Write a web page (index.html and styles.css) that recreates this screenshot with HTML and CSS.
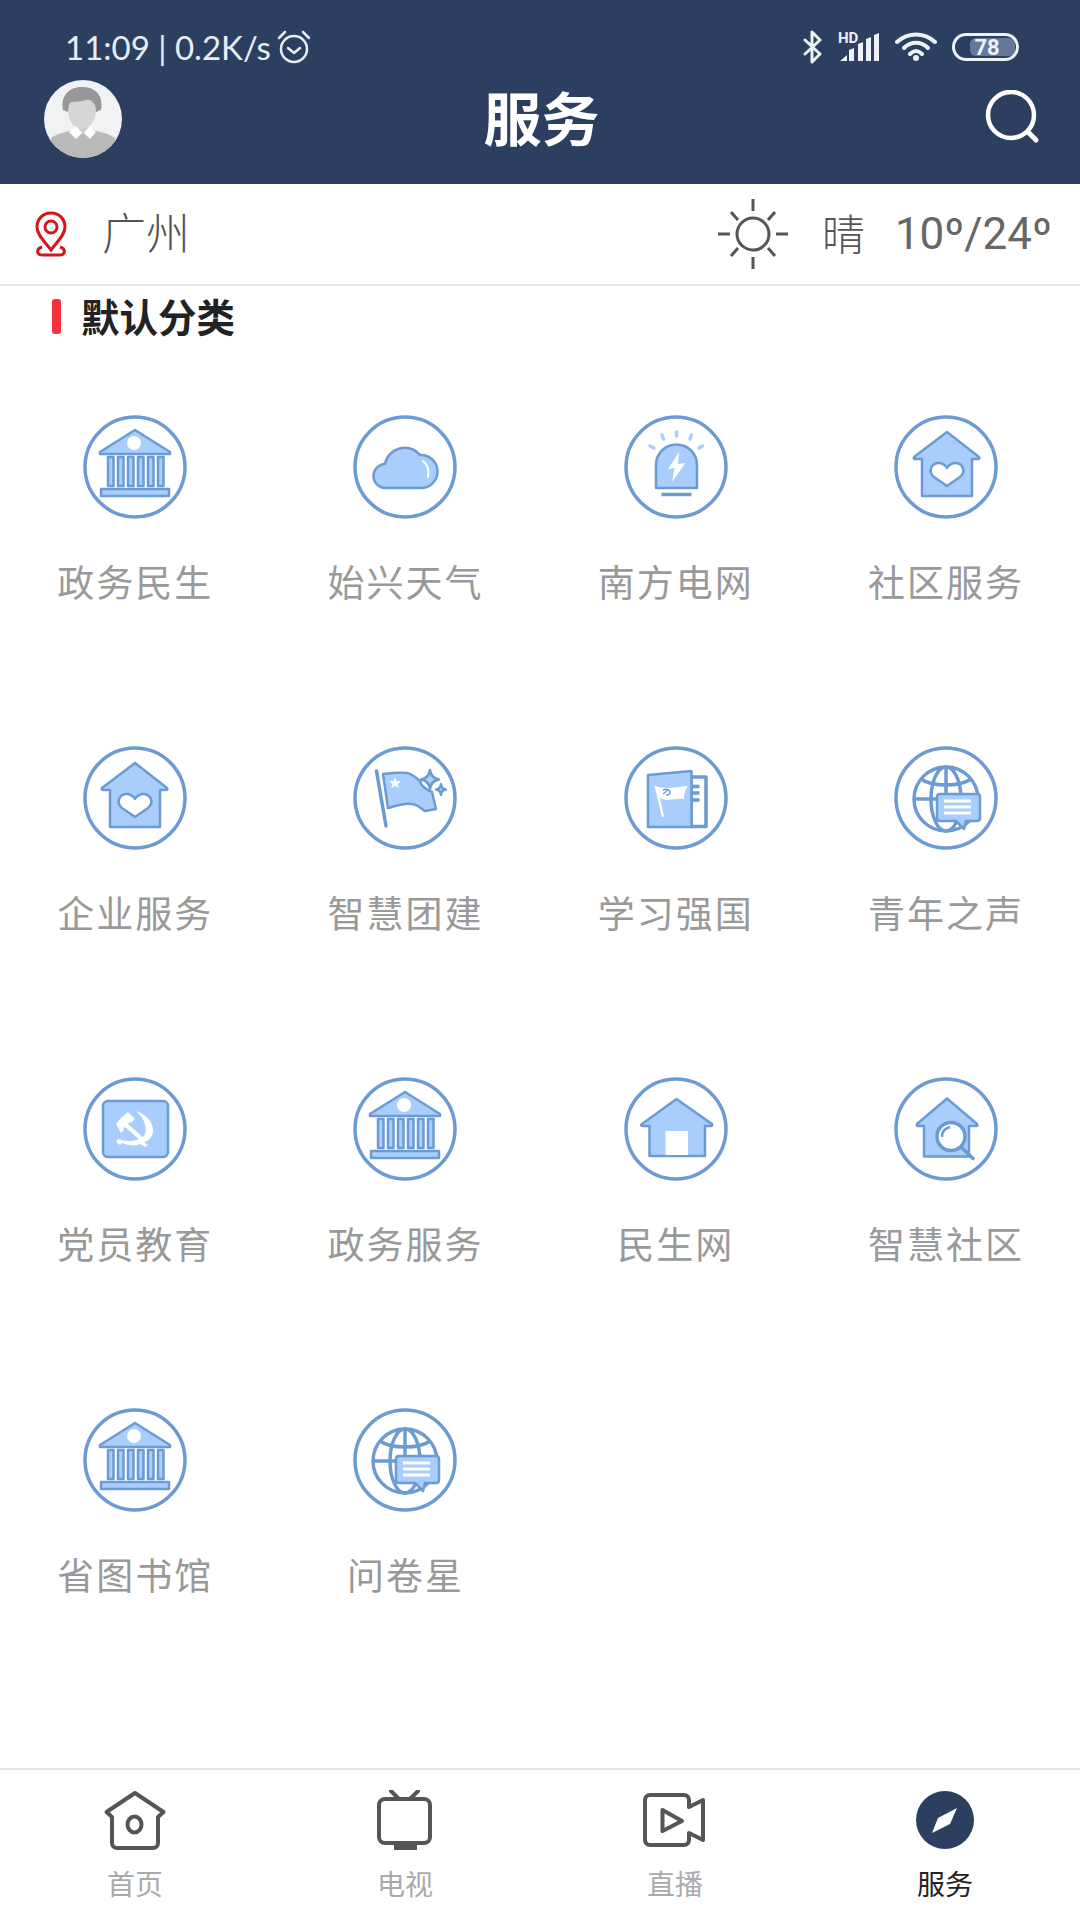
FILE: index.html
```html
<!DOCTYPE html>
<html lang="zh-CN">
<head>
    <meta charset="UTF-8">
    <meta name="viewport" content="width=device-width, initial-scale=1.0">
    <title>服务</title>
    <link rel="stylesheet" href="styles.css">
</head>
<body>
    <svg class="defs" width="0" height="0">
        <symbol id="bank" viewBox="0 0 104 104">
            <path class="sv" d="M52 15 87 37V39H17V37Z"/>
            <circle class="wh" cx="51" cy="28" r="7"/>
            <rect class="sv" x="25" y="42" width="5.500" height="29"/>
            <rect class="sv" x="35" y="42" width="5.500" height="29"/>
            <rect class="sv" x="45" y="42" width="5.500" height="29"/>
            <rect class="sv" x="55" y="42" width="5.500" height="29"/>
            <rect class="sv" x="65" y="42" width="5.500" height="29"/>
            <rect class="sv" x="75" y="42" width="5.500" height="29"/>
            <rect class="sv" x="18" y="74" width="68" height="7"/>
        </symbol>
        <symbol id="househeart" viewBox="0 0 104 104">
            <path class="sv" d="M53 17 85 42Q86 44 84 44H78V81H28V44H22Q19 44 20 42Z"/>
            <path class="wl" d="M53 71 40 62C33 56 38 47 46 48 50 49 52 51 53 53 54 51 56 49 60 48 68 47 73 56 66 62Z"/>
        </symbol>
        <symbol id="globechat" viewBox="0 0 104 104">
            <circle class="ol heavy" cx="52" cy="53" r="32"/>
            <ellipse class="ol heavy" cx="52" cy="53" rx="15" ry="32"/>
            <path class="ol heavy" d="M52 21V50M20 53H44M27 33C38 41 66 41 77 33"/>
            <path class="sv" d="M46 48H83Q86 48 86 51V72Q86 75 83 75H72L70 83 62 75H46Q43 75 43 72V51Q43 48 46 48Z"/>
            <path class="wb" d="M50 55H77M50 61H77M50 67H77"/>
        </symbol>
    </svg>

    <div class="page">
        <header class="topbar">
            <div class="status">
                <div class="status-left">
                    <span class="clock">11:09 | 0.2K/s</span>
                    <svg class="alarm" width="36" height="36" viewBox="0 0 36 36">
                        <circle cx="18" cy="20" r="13"/>
                        <path d="M12 19 18 24 24 19M3 9 9 3M27 3 33 9"/>
                    </svg>
                </div>
                <div class="status-right">
                    <svg class="st-bt" width="20" height="34" viewBox="0 0 20 34">
                        <path d="M2 10 17 24 9 32V2L17 10 2 24"/>
                    </svg>
                    <svg class="st-sig" width="42" height="32" viewBox="0 0 42 32">
                        <text x="0" y="12">HD</text>
                        <path d="M2 30 9 24V30ZM11 30V19L16 17V30ZM20 30V13L25 11V30ZM28 30V8L33 6V30ZM36 30V4L41 2V30Z"/>
                    </svg>
                    <svg class="st-wifi" width="42" height="30" viewBox="0 0 42 30">
                        <path d="M2 10C13 0 29 0 40 10M9 16C16 9 26 9 33 16M15 22C19 18 23 18 27 22"/>
                        <circle cx="21" cy="26" r="3"/>
                    </svg>
                    <svg class="st-bat" width="67" height="28" viewBox="0 0 67 28">
                        <rect class="bat-level" x="18" y="5" width="45" height="18" rx="6"/>
                        <rect class="bat-case" x="1.500" y="1.500" width="64" height="25" rx="12.500"/>
                        <text x="35" y="22">78</text>
                    </svg>
                </div>
            </div>
            <div class="toolbar">
                <svg class="avatar" width="78" height="78" viewBox="0 0 78 78">
                    <defs><clipPath id="avclip"><circle cx="39" cy="39" r="39"/></clipPath></defs>
                    <g clip-path="url(#avclip)">
                        <rect width="78" height="78" fill="#f1f2f4"/>
                        <path d="M7 58C15 52 27 52 31 48H47C51 52 63 52 71 58V78H7Z" fill="#b9b9b9"/>
                        <path d="M39 54 28 52 34 46 39 50 44 46 50 52Z" fill="#d0d0d0"/>
                        <ellipse cx="38" cy="30" rx="14" ry="19" fill="#d6d6d6"/>
                        <path d="M19 30C16 14 27 7 38 7 50 7 60 14 57 30L52 32C52 24 48 19 42 20 34 23 28 20 25 24L24 32Z" fill="#979797"/>
                        <path d="M32 46 38 53 32 59 25 52ZM46 46 52 52 46 59 40 53Z" fill="#fff"/>
                    </g>
                </svg>
                <h1 class="title">服务</h1>
                <svg class="search" width="56" height="56" viewBox="0 0 56 56">
                    <circle cx="26" cy="25" r="23"/>
                    <path d="M43 42 51 50"/>
                </svg>
            </div>
        </header>

        <div class="locbar">
            <svg class="pin" width="34" height="46" viewBox="0 0 34 46">
                <path d="M17 2C8 2 3 9 3 16 3 24 11 31 17 39 23 31 31 24 31 16 31 9 26 2 17 2Z"/>
                <circle cx="17" cy="16" r="6"/>
                <path d="M8 36C2 38 2 44 9 44H25C32 44 32 38 26 36"/>
            </svg>
            <span class="city">广州</span>
            <div class="weather">
                <svg class="sun" width="72" height="70" viewBox="0 0 72 70">
                    <circle cx="36" cy="35" r="16"/>
                    <path d="M36 0V12M36 58V70M1 35H13M59 35H71M14 13 21 21M58 13 51 21M14 57 21 49M58 57 51 49"/>
                </svg>
                <span class="sky">晴</span>
                <span class="temp">10º/24º</span>
            </div>
        </div>

        <main class="content">
            <div class="section-head">
                <i class="section-mark"></i>
                <h2 class="section-title">默认分类</h2>
            </div>
            <div class="grid">
                <div class="cell">
                    <svg class="icon" viewBox="0 0 104 104"><circle class="ring" cx="52" cy="52" r="50"/><use href="#bank"/></svg>
                    <span class="label">政务民生</span>
                </div>
                <div class="cell">
                    <svg class="icon" viewBox="0 0 104 104">
                        <circle class="ring" cx="52" cy="52" r="50"/>
                        <path class="sv" d="M33 73A12 12 0 0 1 32 49A20 20 0 0 1 67 40A16.500 16.500 0 0 1 69 73Z"/>
                        <path class="wb thin" d="M70 46Q77 52 75 62"/>
                    </svg>
                    <span class="label">始兴天气</span>
                </div>
                <div class="cell">
                    <svg class="icon" viewBox="0 0 104 104">
                        <circle class="ring" cx="52" cy="52" r="50"/>
                        <path class="sv" d="M32 73V50A20.500 20.500 0 0 1 73 50V73Z"/>
                        <path class="wh" d="M55 37 44 54 50.500 53 48 67 61.500 48 54 49Z"/>
                        <path class="ol heavy" d="M37.500 79.500H67.500"/>
                        <path class="rays" d="M26 31 30 33M38 20 39.500 24M52.500 17V21M67.500 20 66 24M78.500 31 75 33"/>
                    </svg>
                    <span class="label">南方电网</span>
                </div>
                <div class="cell">
                    <svg class="icon" viewBox="0 0 104 104"><circle class="ring" cx="52" cy="52" r="50"/><use href="#househeart"/></svg>
                    <span class="label">社区服务</span>
                </div>

                <div class="cell">
                    <svg class="icon" viewBox="0 0 104 104"><circle class="ring" cx="52" cy="52" r="50"/><use href="#househeart" x="-1"/></svg>
                    <span class="label">企业服务</span>
                </div>
                <div class="cell">
                    <svg class="icon" viewBox="0 0 104 104">
                        <circle class="ring" cx="52" cy="52" r="50"/>
                        <path class="ol heavy round" d="M23.500 25 33 80"/>
                        <path class="sv" d="M30 28C38 27 46 26 54 27 60 28 63 32 67 35 68 40 72 43 79 46L83 63 72 65C68 63 65 58 58 58 50 57 43 60 35 62Z"/>
                        <path class="wh" d="M42 31 43.500 35 48 35 44.500 38 46 42 42 40 38 42 39.500 38 36 35 40.500 35Z"/>
                        <path class="sv" d="M77 24Q78 32 86 33.500 78 35 77 43 76 35 68 33.500 76 32 77 24Z"/>
                        <path class="sv" d="M88 38Q88.500 43 93 43.500 88.500 44 88 49 87.500 44 83 43.500 87.500 43 88 38Z"/>
                    </svg>
                    <span class="label">智慧团建</span>
                </div>
                <div class="cell">
                    <svg class="icon" viewBox="0 0 104 104">
                        <circle class="ring" cx="52" cy="52" r="50"/>
                        <path class="wl heavy" d="M67 31H82V80.500H67Z"/>
                        <path class="ol heavy" d="M68 40.500H75.500M68 47H75.500M68 54H75.500"/>
                        <path class="sv" d="M24 29 67.500 25V81H24Z"/>
                        <path class="wh" d="M30.500 39.500C40 44 50 41 64 40 60 46 60 50 60 53 50 52 44 56 36 52L40 70.500 38 71Z"/>
                        <path class="hs" d="M39 44Q43 42 46 45 47 49 42 49M39 48 44 44"/>
                    </svg>
                    <span class="label">学习强国</span>
                </div>
                <div class="cell">
                    <svg class="icon" viewBox="0 0 104 104"><circle class="ring" cx="52" cy="52" r="50"/><use href="#globechat"/></svg>
                    <span class="label">青年之声</span>
                </div>

                <div class="cell">
                    <svg class="icon" viewBox="0 0 104 104">
                        <circle class="ring" cx="52" cy="52" r="50"/>
                        <rect class="sv" x="20" y="24" width="65" height="56" rx="5"/>
                        <path class="wh" d="M53 34C62 37 70 44 70 53 70 60 66 64 61 65L65 68 62 70 57 67C50 70 45 68 39 66L37 68 33 65 35 62C44 65 55 65 61 59 65 52 62 42 53 34Z"/>
                        <path class="wh" d="M38 41 45 35 52 42 48 46 47 45 45 47 62 62 59 65 42 50 40 52 41 53 38 56 33 47Z"/>
                    </svg>
                    <span class="label">党员教育</span>
                </div>
                <div class="cell">
                    <svg class="icon" viewBox="0 0 104 104"><circle class="ring" cx="52" cy="52" r="50"/><use href="#bank"/></svg>
                    <span class="label">政务服务</span>
                </div>
                <div class="cell">
                    <svg class="icon" viewBox="0 0 104 104">
                        <circle class="ring" cx="52" cy="52" r="50"/>
                        <path class="sv" d="M52.500 22 88 47Q89 49 87 49H81V79H25.500V49H19Q16 49 18 47Z"/>
                        <rect class="wf" x="41.500" y="54" width="22.500" height="24"/>
                    </svg>
                    <span class="label">民生网</span>
                </div>
                <div class="cell">
                    <svg class="icon" viewBox="0 0 104 104">
                        <circle class="ring" cx="52" cy="52" r="50"/>
                        <path class="sv" d="M53 21.500 83 47Q84 49 82 49H75V79.500H30V49H24Q22 49 23 47Z"/>
                        <path class="ol heavy round" d="M67 70 79 81.500"/>
                        <circle class="wl heavy" cx="57" cy="59.500" r="14"/>
                        <path class="ol" d="M48 60Q48 52 56 50"/>
                    </svg>
                    <span class="label">智慧社区</span>
                </div>

                <div class="cell">
                    <svg class="icon" viewBox="0 0 104 104"><circle class="ring" cx="52" cy="52" r="50"/><use href="#bank"/></svg>
                    <span class="label">省图书馆</span>
                </div>
                <div class="cell">
                    <svg class="icon" viewBox="0 0 104 104"><circle class="ring" cx="52" cy="52" r="50"/><use href="#globechat"/></svg>
                    <span class="label">问卷星</span>
                </div>
            </div>
        </main>

        <nav class="tabbar">
            <div class="tab">
                <svg class="tab-icon" viewBox="0 0 64 62">
                    <path d="M9 27 3.500 22 32 3 60.500 22 55 27V53A5 5 0 0 1 50 58H14A5 5 0 0 1 9 53Z"/>
                    <ellipse cx="31.500" cy="34.500" rx="7" ry="8"/>
                </svg>
                <span class="tab-label">首页</span>
            </div>
            <div class="tab">
                <svg class="tab-icon" viewBox="0 0 64 62">
                    <rect x="6" y="9" width="51" height="44" rx="6"/>
                    <path d="M18 1 26 9M45 1 37 9"/>
                    <path class="tab-fill" d="M21 55H44V60H21Z"/>
                </svg>
                <span class="tab-label">电视</span>
            </div>
            <div class="tab">
                <svg class="tab-icon" viewBox="0 0 64 62">
                    <path d="M46 17V10A5 5 0 0 0 41 5H7A5 5 0 0 0 2 10V50A5 5 0 0 0 7 55H41A5 5 0 0 0 46 50V43L60 50V10Z"/>
                    <path d="M19.500 20 39 31 19.500 41Z"/>
                </svg>
                <span class="tab-label">直播</span>
            </div>
            <div class="tab active">
                <svg class="tab-icon compass" viewBox="0 0 64 62">
                    <circle cx="32" cy="30" r="29"/>
                    <path class="needle" d="M44 18 37 34 19 43 25 28Z"/>
                </svg>
                <span class="tab-label">服务</span>
            </div>
        </nav>
    </div>
</body>
</html>
```

FILE: styles.css
```css
* { box-sizing: border-box; }
body { margin: 0; background: #fff; font-family: "Noto Sans CJK SC", "Noto Sans", sans-serif; }
h1, h2 { margin: 0; }
.defs { position: absolute; }
.page { width: 1080px; height: 1920px; display: flex; flex-direction: column; overflow: hidden; }

/* top bar */
.topbar { height: 184px; background: #2c3f60; color: #fff; padding-top: 28px; }
.status { height: 38px; display: flex; align-items: center; justify-content: space-between; padding: 0 61px 0 65px; }
.status-left { display: flex; align-items: center; gap: 5px; }
.clock { font-family: Lato, sans-serif; font-size: 33px; color: #e8ecf3; white-space: nowrap; }
.alarm { fill: none; stroke: #e8ecf3; stroke-width: 2.5; stroke-linecap: round; stroke-linejoin: round; }
.status-right { display: flex; align-items: center; gap: 15px; }
.st-bt path { fill: none; stroke: #eef1f6; stroke-width: 3; stroke-linejoin: round; stroke-linecap: round; }
.st-sig { fill: #eef1f6; overflow: visible; }
.st-sig text { font-family: Roboto, sans-serif; font-weight: 700; font-size: 15px; }
.st-wifi path { fill: none; stroke: #eef1f6; stroke-width: 4; stroke-linecap: round; }
.st-wifi circle { fill: #eef1f6; }
.bat-case { fill: none; stroke: #eef1f6; stroke-width: 3; }
.bat-level { fill: #66779a; }
.st-bat text { font-family: Roboto, sans-serif; font-weight: 700; font-size: 22px; fill: #eef1f6; text-anchor: middle; }
.toolbar { height: 104px; display: grid; grid-template-columns: 1fr auto 1fr; align-items: center; padding: 0 39px 0 44px; }
.avatar { margin-top: 2px; }
.title { font-size: 58px; line-height: 1; font-weight: 700; margin: -5px 0 0 -2px; }
.search { justify-self: end; fill: none; stroke: #fff; stroke-width: 5; stroke-linecap: round; margin-top: -1px; }
.search circle { stroke-width: 4.5; }

/* city and weather */
.locbar { height: 102px; display: flex; align-items: center; padding: 0 28px 0 34px; border-bottom: 2px solid #e5e5e5; color: #555; }
.pin { fill: none; stroke: #d3161c; stroke-width: 3; }
.city { font-size: 44px; line-height: 1; font-weight: 300; margin: -6px 0 0 34px; }
.weather { margin-left: auto; display: flex; align-items: center; }
.sun { fill: none; stroke: #555; stroke-width: 3; }
.sky { font-size: 43px; line-height: 1; font-weight: 300; margin: -4px 0 0 33px; }
.temp { font-family: Roboto, sans-serif; font-size: 44px; color: #666; margin-left: 30px; }

/* service grid */
.content { flex: 1; }
.section-head { height: 60px; display: flex; align-items: center; padding-left: 52px; }
.section-mark { display: block; width: 9px; height: 35px; background: #f5333a; border-radius: 3px; margin-top: 1px; }
.section-title { font-size: 38.500px; line-height: 1; font-weight: 700; color: #222; margin: -1px 0 0 20px; }
.grid { display: grid; grid-template-columns: repeat(4, 270.300px); grid-auto-rows: 331px; padding-top: 69px; }
.cell { display: flex; flex-direction: column; align-items: center; }
.icon { width: 104px; height: 104px; display: block; }
.label { margin-top: 37px; font-size: 37px; line-height: 50px; letter-spacing: 2px; color: #999; white-space: nowrap; }

.ring { fill: #fff; stroke: #6c9bd2; stroke-width: 3.500; }
.sv { fill: #a9cdfc; stroke: #6c9bd2; stroke-width: 2.500; stroke-linejoin: round; }
.wh { fill: #fff; }
.wf { fill: #fff; }
.wl { fill: #fff; stroke: #6c9bd2; stroke-width: 2.500; stroke-linejoin: round; }
.ol { fill: none; stroke: #6c9bd2; stroke-width: 2.500; }
.heavy { stroke-width: 3.500; }
.round { stroke-linecap: round; }
.wb { fill: none; stroke: #fff; stroke-width: 3; }
.thin { stroke-width: 2; stroke-linecap: round; }
.rays { fill: none; stroke: #a9cdfc; stroke-width: 3.500; stroke-linecap: round; }
.hs { fill: none; stroke: #6c9bd2; stroke-width: 1.500; }

/* bottom tabs */
.tabbar { height: 152px; display: flex; border-top: 2px solid #e5e5e5; padding-top: 20px; }
.tab { width: 270px; display: flex; flex-direction: column; align-items: center; }
.tab-icon { width: 64px; height: 62px; fill: none; stroke: #555; stroke-width: 4; stroke-linejoin: round; stroke-linecap: round; }
.tab-fill { fill: #555; stroke: none; }
.compass { stroke: none; fill: #2c3f60; }
.needle { fill: #fff; }
.tab-label { margin-top: 11px; font-size: 28px; line-height: 40px; color: #aaa; }
.active .tab-label { color: #222; }
```
